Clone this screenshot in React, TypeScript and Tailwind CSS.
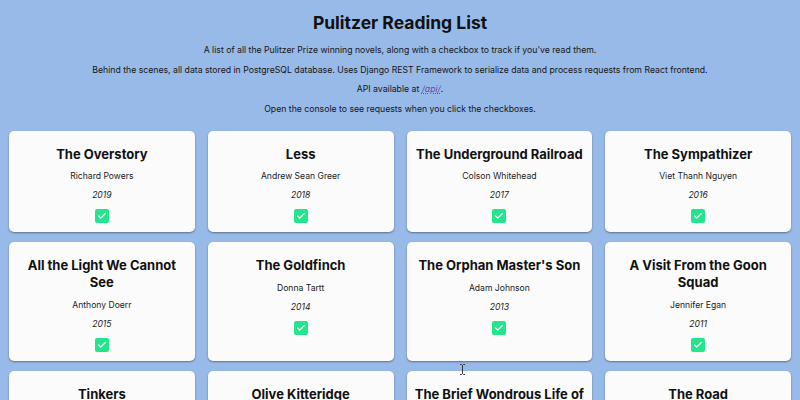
import { Check } from 'lucide-react'

type Book = {
  title: string
  author: string
  year: number
  read: boolean
}

const books: Book[] = [
  { title: 'The Overstory', author: 'Richard Powers', year: 2019, read: true },
  { title: 'Less', author: 'Andrew Sean Greer', year: 2018, read: true },
  { title: 'The Underground Railroad', author: 'Colson Whitehead', year: 2017, read: true },
  { title: 'The Sympathizer', author: 'Viet Thanh Nguyen', year: 2016, read: true },
  { title: 'All the Light We Cannot See', author: 'Anthony Doerr', year: 2015, read: true },
  { title: 'The Goldfinch', author: 'Donna Tartt', year: 2014, read: true },
  { title: "The Orphan Master's Son", author: 'Adam Johnson', year: 2013, read: true },
  { title: 'A Visit From the Goon Squad', author: 'Jennifer Egan', year: 2011, read: true },
  { title: 'Tinkers', author: 'Paul Harding', year: 2010, read: true },
  { title: 'Olive Kitteridge', author: 'Elizabeth Strout', year: 2009, read: true },
  { title: 'The Brief Wondrous Life of Oscar Wao', author: 'Junot Díaz', year: 2008, read: true },
  { title: 'The Road', author: 'Cormac McCarthy', year: 2007, read: true },
]

function BookCard({ book }: { book: Book }) {
  return (
    <div className="flex flex-col items-center rounded-[5px] bg-[#fbfbfc] px-[8px] pt-[15px] pb-[9px] text-center shadow-[0_1px_2px_rgba(0,0,0,0.4)]">
      <h2 className="text-[13px] font-bold leading-[17px] text-[#111]">{book.title}</h2>
      <p className="mt-[7.5px] text-[8.6px] leading-[12px] text-[#1a1a1a]">{book.author}</p>
      <p className="mt-[7px] text-[8.6px] italic leading-[12px] text-[#1a1a1a]">{book.year}</p>
      <button
        className={`mt-[8px] flex h-[14px] w-[14px] items-center justify-center rounded-[2px] ${book.read ? 'bg-[#24e48c]' : 'border border-gray-400 bg-white'}`}
        aria-label="Toggle read"
      >
        {book.read && <Check className="h-[10px] w-[10px] text-white" strokeWidth={3} />}
      </button>
    </div>
  )
}

export default function App() {
  return (
    <div className="relative min-h-screen bg-[#98bae8] font-['Inter',sans-serif] text-[#111]">
      <div className="pt-[9px] text-center">
        <h1 className="text-[17.5px] font-bold leading-[28px]">Pulitzer Reading List</h1>
        <div className="mt-[4px] text-[8.7px] text-[#151515]">
          <p className="leading-[19.7px]">
            A list of all the Pulitzer Prize winning novels, along with a checkbox to track if you've read them.
          </p>
          <p className="leading-[19.7px]">
            Behind the scenes, all data stored in PostgreSQL database. Uses Django REST Framework to serialize data and process requests from React frontend.
          </p>
          <p className="leading-[19.7px]">
            API available at{' '}
            <a href="#" className="italic text-[#6b46a8] underline decoration-dotted">
              /api/
            </a>
            .
          </p>
          <p className="leading-[19.7px]">Open the console to see requests when you click the checkboxes.</p>
        </div>
      </div>
      <div className="mt-[11px] grid grid-cols-4 gap-x-[13px] gap-y-[10px] px-[9px] pb-4">
        {books.map((b) => (
          <BookCard key={b.year} book={b} />
        ))}
      </div>
      <svg
        className="pointer-events-none absolute left-[459px] top-[364px]"
        width="7"
        height="11"
        viewBox="0 0 7 11"
        fill="none"
        stroke="#333"
        strokeWidth="1"
      >
        <path d="M1 0.5h1.5l1 1 1-1H6M3.5 1.5v8M1 10.5h1.5l1-1 1 1H6" />
      </svg>
    </div>
  )
}
